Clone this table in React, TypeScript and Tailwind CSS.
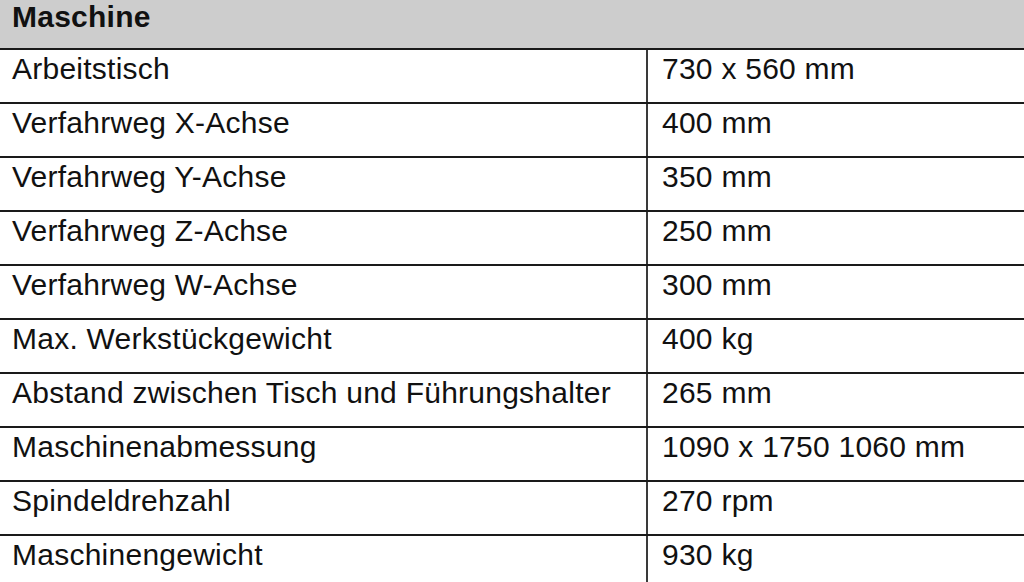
const rows: [string, string][] = [
  ['Arbeitstisch', '730 x 560 mm'],
  ['Verfahrweg X-Achse', '400 mm'],
  ['Verfahrweg Y-Achse', '350 mm'],
  ['Verfahrweg Z-Achse', '250 mm'],
  ['Verfahrweg W-Achse', '300 mm'],
  ['Max. Werkstückgewicht', '400 kg'],
  ['Abstand zwischen Tisch und Führungshalter', '265 mm'],
  ['Maschinenabmessung', '1090 x 1750 1060 mm'],
  ['Spindeldrehzahl', '270 rpm'],
  ['Maschinengewicht', '930 kg'],
];

export default function App() {
  return (
    <div className="h-[582px] w-[1024px] overflow-hidden bg-white font-['Liberation_Sans',Arial,sans-serif] text-[30px] leading-[34px] tracking-[0.25px] text-[#111]">
      {/* header */}
      <div className="h-[48px] bg-[#cdcdcd] pl-[12px] font-bold">Maschine</div>
      {rows.map(([label, value]) => (
        <div key={label} className="flex h-[54px] border-t-2 border-[#1a1a1a]">
          <div className="w-[646px] shrink-0 pl-[12px] pt-[2px]">{label}</div>
          <div className="flex-1 border-l-2 border-[#3a3a3a] pl-[14px] pt-[2px]">{value}</div>
        </div>
      ))}
    </div>
  );
}
